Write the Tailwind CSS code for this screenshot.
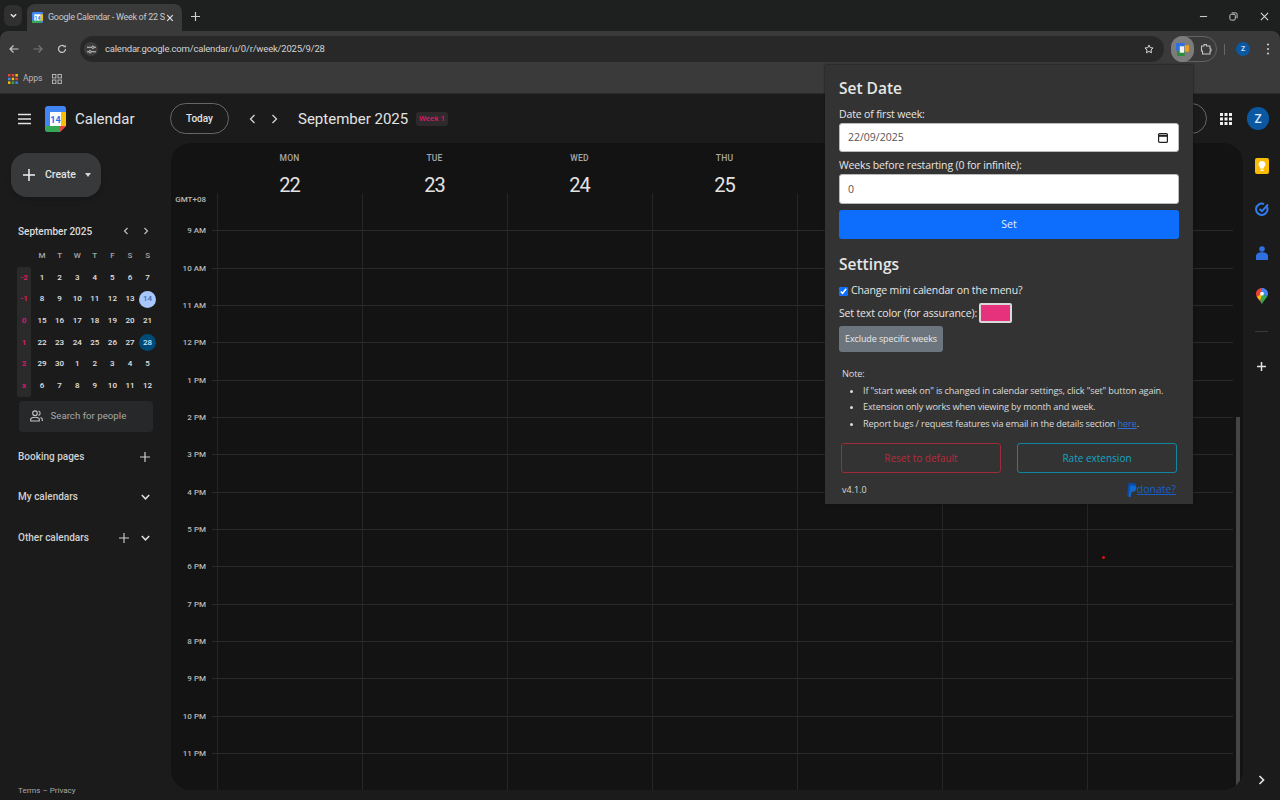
<!DOCTYPE html>
<html lang="en">
<head>
    <meta charset="UTF-8">
    <title>Google Calendar - Week of 22 September 2025</title>
    <script src="https://cdn.jsdelivr.net/npm/@tailwindcss/browser@4"></script>
</head>
<body class="relative flex h-[800px] w-[1280px] flex-col overflow-hidden bg-[#1b1b1b] font-['Roboto',sans-serif] text-[#e3e3e3]">

    <!-- tab strip -->
    <div class="flex h-[31px] items-end bg-[#1e1f1f]">
        <div class="mb-[5px] ml-[4px] flex h-[21px] w-[18px] items-center justify-center rounded-md bg-[#303030]">
            <svg class="h-[9px] w-[9px]" viewBox="0 0 10 10" fill="none" stroke="#e3e3e3" stroke-width="1.6"><path d="M2 3.5 5 6.5 8 3.5"/></svg>
        </div>
        <div class="ml-[5px] flex h-[27px] w-[155px] items-center rounded-t-lg bg-[#3a3a3a] pl-[5px]">
            <svg class="h-[11px] w-[11px]" viewBox="0 0 24 24"><rect width="24" height="24" rx="3" fill="#4285f4"/><rect x="5" y="5" width="14" height="14" fill="#fff"/><rect y="19" width="19" height="5" fill="#34a853"/><rect x="19" y="5" width="5" height="14" fill="#fbbc04"/><text x="12" y="17" font-size="11" font-weight="700" text-anchor="middle" fill="#1a73e8">14</text></svg>
            <span class="ml-[5px] w-[118px] text-[9px] tracking-[-0.3px] whitespace-nowrap text-[#c8c8c8]">Google Calendar - Week of 22 S</span>
            <svg class="h-[8px] w-[8px]" viewBox="0 0 10 10" stroke="#e3e3e3" stroke-width="1.5"><path d="M1.500 1.500 8.500 8.500M8.500 1.500 1.500 8.500"/></svg>
        </div>
        <svg class="mb-[10px] ml-[9px] h-[9px] w-[9px]" viewBox="0 0 10 10" stroke="#d0d0d0" stroke-width="1.3"><path d="M5 0v10M0 5h10"/></svg>
        <div class="mb-[10px] ml-auto flex items-center">
            <svg class="h-[9px] w-[9px]" viewBox="0 0 10 10" stroke="#c8c8c8" stroke-width="1.2"><path d="M1 5h8"/></svg>
            <svg class="ml-[21px] h-[9px] w-[9px]" viewBox="0 0 10 10" fill="none" stroke="#c8c8c8" stroke-width="1.1"><rect x="1" y="2.5" width="6" height="6.5" rx="1.5"/><path d="M3 1h4.5A1.5 1.5 0 0 1 9 2.5V7"/></svg>
            <svg class="ml-[22px] mr-[11px] h-[9px] w-[9px]" viewBox="0 0 10 10" stroke="#d8d8d8" stroke-width="1.2"><path d="M1 1l8 8M9 1 1 9"/></svg>
        </div>
    </div>

    <!-- toolbar -->
    <div class="flex h-[33px] items-center rounded-t-lg bg-[#3a3a3a] pt-[3px]">
        <svg class="ml-[9px] h-[10px] w-[10px]" viewBox="0 0 10 10" fill="none" stroke="#c8c8c8" stroke-width="1.2"><path d="M9.5 5H1M4.5 1.5 1 5l3.5 3.5"/></svg>
        <svg class="ml-[14px] h-[10px] w-[10px]" viewBox="0 0 10 10" fill="none" stroke="#777" stroke-width="1.2"><path d="M.5 5H9M5.5 1.5 9 5 5.500 8.500"/></svg>
        <svg class="ml-[14px] h-[10px] w-[10px]" viewBox="0 0 10 10" fill="none" stroke="#c8c8c8" stroke-width="1.2"><path d="M8.500 5a3.500 3.500 0 1 1-1-2.500"/><path d="M8.800 .8v2.500H6.300" fill="#c8c8c8" stroke="none"/></svg>
        <div class="ml-[13px] flex h-[26px] w-[1084px] items-center rounded-full bg-[#282828]">
            <div class="ml-[4px] flex h-[14px] w-[14px] items-center justify-center rounded-full bg-[#3d3d3d]">
                <svg class="h-[9px] w-[9px]" viewBox="0 0 10 10" fill="none" stroke="#d5d5d5" stroke-width="1"><path d="M0 2.500h5M8 2.500h2M0 7.500h2M5 7.500h5"/><circle cx="6.500" cy="2.500" r="1.300"/><circle cx="3.500" cy="7.500" r="1.300"/></svg>
            </div>
            <span class="ml-[7px] text-[9.5px] tracking-[-0.2px] text-[#d2d2d2]">calendar.google.com/calendar/u/0/r/week/2025/9/28</span>
            <svg class="ml-auto mr-[10px] h-[10px] w-[10px]" viewBox="0 0 24 24" fill="none" stroke="#d8d8d8" stroke-width="2.400"><path d="M12 2.500l2.900 6.300 6.900.8-5.100 4.700 1.400 6.800-6.100-3.400-6.100 3.400 1.400-6.800L2.200 9.600l6.900-.8z"/></svg>
        </div>
        <div class="ml-[7px] flex h-[26px] w-[46px] items-center rounded-full border border-[#626262]">
            <div class="-ml-px flex h-[26px] w-[23px] shrink-0 items-center justify-center rounded-full bg-[#7c7c7c]">
                <svg class="h-[13px] w-[13px]" viewBox="0 0 12 12"><rect width="8" height="7" fill="#2f6fe0"/><rect x="8" y="2" width="4" height="6" fill="#e8a020"/><rect x="1" y="7" width="7" height="5" fill="#2c8a3e"/><rect x="3.500" y="3" width="4" height="6" fill="#f2f2f2"/></svg>
            </div>
            <svg class="ml-[6px] h-[12px] w-[12px]" viewBox="0 0 12 12" fill="none" stroke="#c8c8c8" stroke-width="1.100"><path d="M1.500 3h2.500V1.500h2.500V3H10v3h1v2h-1v3H2.500V8H1.500z" stroke-linejoin="round"/></svg>
        </div>
        <div class="ml-[7px] h-[11px] w-px bg-[#666]"></div>
        <div class="ml-[11px] flex h-[14px] w-[14px] items-center justify-center rounded-full bg-[#0b57a0] text-[7px] font-bold text-[#cfe3ff]">Z</div>
        <svg class="ml-[16px] h-[12px] w-[4px]" viewBox="0 0 4 12" fill="#c8c8c8"><circle cx="2" cy="1.500" r="1.100"/><circle cx="2" cy="6" r="1.100"/><circle cx="2" cy="10.500" r="1.100"/></svg>
    </div>

    <!-- bookmarks bar -->
    <div class="flex h-[30px] items-center border-b border-[#2c2c2c] bg-[#3a3a3a]">
        <svg class="ml-[8px] h-[10px] w-[10px]" viewBox="0 0 10 10">
            <rect width="2.500" height="2.500" fill="#ea4335"/><rect x="3.700" width="2.500" height="2.500" fill="#ea4335"/><rect x="7.400" width="2.500" height="2.500" fill="#fbbc04"/>
            <rect y="3.700" width="2.500" height="2.500" fill="#4285f4"/><rect x="3.700" y="3.700" width="2.500" height="2.500" fill="#fbbc04"/><rect x="7.400" y="3.700" width="2.500" height="2.500" fill="#ea4335"/>
            <rect y="7.400" width="2.500" height="2.500" fill="#fbbc04"/><rect x="3.700" y="7.400" width="2.500" height="2.500" fill="#34a853"/><rect x="7.400" y="7.400" width="2.500" height="2.500" fill="#4285f4"/>
        </svg>
        <span class="ml-[5px] w-[18px] text-[8.5px] text-[#b8b8b8]">Apps</span>
        <svg class="ml-[11px] h-[10px] w-[10px]" viewBox="0 0 10 10" fill="none" stroke="#c0c0c0" stroke-width=".9"><rect x=".5" y=".5" width="3.400" height="3.400"/><rect x="6" y=".5" width="3.400" height="3.400"/><rect x=".5" y="6" width="3.400" height="3.400"/><rect x="6" y="6" width="3.400" height="3.400"/></svg>
    </div>

    <!-- calendar app -->
    <div class="flex min-h-0 flex-1 flex-col">
        <header class="flex h-[49px] shrink-0 items-center">
            <svg class="ml-[18px] h-[12px] w-[13px]" viewBox="0 0 13 12" stroke="#e3e3e3" stroke-width="1.400"><path d="M0 1.500h13M0 6h13M0 10.500h13"/></svg>
            <svg class="ml-[14px] h-[26px] w-[21px]" viewBox="0 0 21 26">
                <path d="M3 0h15a3 3 0 0 1 3 3v17l-6 6H3a3 3 0 0 1-3-3V3a3 3 0 0 1 3-3z" fill="#4285f4"/>
                <rect x="5" y="6" width="11" height="14" fill="#fff"/>
                <path d="M16 6h5v14h-5z" fill="#fbbc04"/>
                <path d="M0 20h15v6H3a3 3 0 0 1-3-3z" fill="#34a853"/>
                <path d="M15 20h6l-6 6z" fill="#ea4335"/>
                <text x="10.500" y="17" font-size="9" font-weight="700" text-anchor="middle" fill="#1a73e8">14</text>
            </svg>
            <span class="ml-[9px] mt-[2px] w-[59px] text-[15px] text-[#e3e3e3]">Calendar</span>
            <button class="ml-[36px] h-[31px] w-[59px] rounded-full border border-[#666] text-[10px] font-medium text-[#e3e3e3]">Today</button>
            <svg class="ml-[20px] h-[10px] w-[7px]" viewBox="0 0 7 10" fill="none" stroke="#d5d5d5" stroke-width="1.300"><path d="M5.500 1 1.500 5l4 4"/></svg>
            <svg class="ml-[15px] h-[10px] w-[7px]" viewBox="0 0 7 10" fill="none" stroke="#d5d5d5" stroke-width="1.300"><path d="M1.500 1l4 4-4 4"/></svg>
            <span class="ml-[20px] mt-[1px] w-[110px] text-[15px] whitespace-nowrap text-[#e3e3e3]">September 2025</span>
            <span class="ml-[8px] flex h-[14px] w-[32px] items-center justify-center rounded-[3px] bg-[#2e2a2c] text-[8px] font-medium text-[#d81b60]">Week 1</span>
            <div class="ml-auto h-[31px] w-[60px] rounded-full border border-[#666]"></div>
            <svg class="ml-[13px] h-[12px] w-[12px]" viewBox="0 0 12 12" fill="#f0f0f0">
                <rect width="3" height="3"/><rect x="4.500" width="3" height="3"/><rect x="9" width="3" height="3"/>
                <rect y="4.500" width="3" height="3"/><rect x="4.500" y="4.500" width="3" height="3"/><rect x="9" y="4.500" width="3" height="3"/>
                <rect y="9" width="3" height="3"/><rect x="4.500" y="9" width="3" height="3"/><rect x="9" y="9" width="3" height="3"/>
            </svg>
            <div class="ml-[15px] mr-[11px] flex h-[23px] w-[22px] items-center justify-center rounded-full bg-[#0b57a0] text-[12px] font-medium text-[#d8e8ff]">Z</div>
        </header>

        <div class="flex min-h-0 flex-1">
            <!-- sidebar -->
            <aside class="flex w-[171px] shrink-0 flex-col">
                <button class="ml-[11px] mt-[10px] flex h-[44px] w-[90px] items-center rounded-2xl bg-[#37393b] shadow-md">
                    <svg class="ml-[12px] h-[12px] w-[12px]" viewBox="0 0 12 12" stroke="#f0f0f0" stroke-width="1.500"><path d="M6 0v12M0 6h12"/></svg>
                    <span class="ml-[10px] text-[10.5px] font-medium text-[#e3e3e3]">Create</span>
                    <svg class="ml-[9px] h-[4px] w-[6px]" viewBox="0 0 6 4" fill="#d5d5d5"><path d="M0 0h6L3 4z"/></svg>
                </button>

                <div class="ml-[18px] mt-[27px] flex h-[14px] items-center">
                    <span class="w-[73px] text-[10px] font-medium whitespace-nowrap text-[#dcdcdc]">September 2025</span>
                    <svg class="ml-[32px] h-[8px] w-[6px]" viewBox="0 0 6 8" fill="none" stroke="#c4c4c4" stroke-width="1.100"><path d="M4.500 1 1.500 4l3 3"/></svg>
                    <svg class="ml-[14px] h-[8px] w-[6px]" viewBox="0 0 6 8" fill="none" stroke="#c4c4c4" stroke-width="1.100"><path d="M1.500 1l3 3-3 3"/></svg>
                </div>

                <div class="ml-[17px] mt-[7px] flex">
                    <div class="mt-[21.700px] w-[14px] rounded-[2px] bg-[#2a2a2a]" id="weekNums"></div>
                    <div class="ml-[2.200px] grid w-[123.200px] grid-cols-7 text-center" id="miniGrid"></div>
                </div>

                <div class="ml-[18.500px] mt-[4px] flex h-[31px] w-[134px] items-center rounded-[4px] bg-[#272829]">
                    <svg class="ml-[11px] h-[12px] w-[13px]" viewBox="0 0 13 12" fill="none" stroke="#c4c4c4" stroke-width="1.100"><circle cx="5" cy="3.200" r="2.300"/><path d="M.7 11V9.500C.7 8 3 7.300 5 7.300s4.300.7 4.300 2.200V11zM8.500 1a2.300 2.300 0 0 1 0 4.400M10.500 7.600c1 .4 1.800 1 1.800 1.900V11"/></svg>
                    <span class="ml-[8px] text-[9.7px] text-[#a8a8a8]">Search for people</span>
                </div>

                <div class="ml-[18px] mt-[18px] flex h-[14px] w-[132px] items-center justify-between text-[10px] font-medium text-[#d0d0d0]">
                    <span>Booking pages</span>
                    <svg class="h-[10px] w-[10px]" viewBox="0 0 10 10" stroke="#d0d0d0" stroke-width="1.200"><path d="M5 0v10M0 5h10"/></svg>
                </div>
                <div class="ml-[18px] mt-[26px] flex h-[14px] w-[132px] items-center justify-between text-[10px] font-medium text-[#d0d0d0]">
                    <span>My calendars</span>
                    <svg class="h-[6px] w-[9px]" viewBox="0 0 9 6" fill="none" stroke="#e0e0e0" stroke-width="1.500"><path d="M.8 1 4.500 4.800 8.200 1"/></svg>
                </div>
                <div class="ml-[18px] mt-[27px] flex h-[14px] w-[132px] items-center text-[10px] font-medium text-[#d0d0d0]">
                    <span>Other calendars</span>
                    <svg class="ml-auto h-[10px] w-[10px]" viewBox="0 0 10 10" stroke="#d0d0d0" stroke-width="1.100"><path d="M5 0v10M0 5h10"/></svg>
                    <svg class="ml-[12px] h-[6px] w-[9px]" viewBox="0 0 9 6" fill="none" stroke="#e0e0e0" stroke-width="1.500"><path d="M.8 1 4.500 4.800 8.200 1"/></svg>
                </div>
                <div class="ml-[18px] mt-auto h-[15px] text-[8px] text-[#a8a8a8]">Terms – Privacy</div>
            </aside>

            <!-- week grid -->
            <main class="relative mb-[10px] flex w-[1072px] shrink-0 flex-col overflow-hidden rounded-[20px] bg-[#131313]">
                <div class="flex h-[50px] shrink-0 pl-[46px]">
                    <div class="flex w-[145px] flex-col items-center pt-[9px]"><span class="text-[8.500px] font-medium tracking-wide text-[#a8a8a8]">MON</span><span class="mt-[8px] text-[20px] leading-[24px] tracking-[-1px] text-[#e3e3e3]">22</span></div>
                    <div class="flex w-[145px] flex-col items-center pt-[9px]"><span class="text-[8.500px] font-medium tracking-wide text-[#a8a8a8]">TUE</span><span class="mt-[8px] text-[20px] leading-[24px] tracking-[-1px] text-[#e3e3e3]">23</span></div>
                    <div class="flex w-[145px] flex-col items-center pt-[9px]"><span class="text-[8.500px] font-medium tracking-wide text-[#a8a8a8]">WED</span><span class="mt-[8px] text-[20px] leading-[24px] tracking-[-1px] text-[#e3e3e3]">24</span></div>
                    <div class="flex w-[145px] flex-col items-center pt-[9px]"><span class="text-[8.500px] font-medium tracking-wide text-[#a8a8a8]">THU</span><span class="mt-[8px] text-[20px] leading-[24px] tracking-[-1px] text-[#e3e3e3]">25</span></div>
                </div>
                <div class="flex min-h-0 flex-1 flex-col" id="hourRows"></div>
                <!-- scrollbar thumb + current time dot -->
                <div class="absolute right-[3px] top-[274px] h-[373px] w-[4px] bg-[#454545]"></div>
                <div class="absolute left-[931px] top-[413px] h-[3px] w-[3px] rounded-full bg-[#e01010]"></div>
            </main>

            <!-- right rail -->
            <aside class="flex flex-1 flex-col items-center">
                <div class="mt-[15px] flex h-[16px] w-[14px] items-center justify-center rounded-[2px] bg-[#fbbc04]">
                    <svg class="h-[10px] w-[8px]" viewBox="0 0 8 10" fill="#fff"><path d="M4 0a3.300 3.300 0 0 1 2 6v1.500H2V6a3.300 3.300 0 0 1 2-6zM2.500 8.500h3V10h-3z"/></svg>
                </div>
                <svg class="mt-[27px] h-[16px] w-[14px]" viewBox="0 0 14 16" fill="none" stroke="#2f7cf0" stroke-width="2"><path d="M12 6a5.700 5.700 0 1 1-3-3"/><path d="M4.500 8 7 10.200 13 3.500"/></svg>
                <svg class="mt-[29px] h-[14px] w-[12px]" viewBox="0 0 12 14" fill="#2f6fe0"><circle cx="6" cy="3" r="2.800"/><path d="M0 14V10c0-2.300 2.500-3.700 6-3.700S12 7.700 12 10v4z"/></svg>
                <svg class="mt-[28px] h-[16px] w-[12px]" viewBox="0 0 12 16">
                    <path d="M6 16C4.500 12.500 0 10 0 5.700 0 2.500 2.700 0 6 0v4a1.800 1.800 0 0 0 0 3.500z" fill="#ea4335"/>
                    <path d="M6 0c3.300 0 6 2.500 6 5.700 0 1-.3 2-.7 2.700L7.500 6.500A1.800 1.800 0 0 0 6 4z" fill="#4285f4"/>
                    <path d="M1 8.800 4.500 6.500 6 7.500 4.200 12.500C3 11.200 1.800 10.200 1 8.800z" fill="#fbbc04"/>
                    <path d="M6 16c1.200-3 3.800-5 5.300-7.600L7.500 6.500 6 7.500 4.200 12.500c.7.900 1.300 2.200 1.800 3.500z" fill="#34a853"/>
                    <circle cx="6" cy="5.700" r="1.900" fill="#fff"/>
                </svg>
                <div class="mt-[27px] h-px w-[13px] bg-[#3a3a3a]"></div>
                <svg class="mt-[30px] h-[9px] w-[9px]" viewBox="0 0 9 9" stroke="#e3e3e3" stroke-width="1.500"><path d="M4.500 0v9M0 4.500h9"/></svg>
                <svg class="mb-[15px] mt-auto h-[10px] w-[7px]" viewBox="0 0 7 10" fill="none" stroke="#e3e3e3" stroke-width="1.700"><path d="M1.500 1l4 4-4 4"/></svg>
            </aside>
        </div>
    </div>

    <!-- extension popup -->
    <div class="absolute left-[825px] top-[65px] h-[439px] w-[368px] bg-[#333333] px-[14px] font-['Open_Sans',sans-serif] text-[#e6e6e6] shadow-[0_0_2px_#111]">
        <h2 class="mt-[12px] h-[23px] text-[15.5px] leading-[23px] font-semibold">Set Date</h2>
        <label class="mt-[7px] block h-[15px] text-[10.5px] leading-[15px] tracking-[-0.15px]">Date of first week:</label>
        <div class="mt-[1px] flex h-[29px] items-center justify-between rounded-[3px] border border-[#bbb] bg-white pl-[8px] pr-[10px] text-[10.5px] text-[#555]">
            <span class="pt-[1px]">22/09/2025</span>
            <svg class="h-[11px] w-[10px]" viewBox="0 0 10 11" fill="none" stroke="#222" stroke-width="1.200"><rect x=".6" y="1.600" width="8.800" height="8.800" rx="1"/><path d="M.6 3.800h8.800" stroke-width="2"/></svg>
        </div>
        <label class="mt-[6px] block h-[15px] text-[10.5px] leading-[15px] tracking-[-0.15px]">Weeks before restarting (0 for infinite):</label>
        <div class="mt-[1px] flex h-[30px] items-center rounded-[3px] border border-[#bbb] bg-white pl-[8px] pt-[1px] text-[10.5px] text-[#555]">0</div>
        <button class="mt-[6px] h-[29px] w-full rounded-[3px] bg-[#0d6efd] text-[10.5px] text-[#e8f0ff]">Set</button>
        <h2 class="mt-[13px] h-[24px] text-[15.5px] leading-[24px] font-semibold">Settings</h2>
        <div class="mt-[8px] flex h-[14px] items-center text-[10.5px] tracking-[-0.15px]">
            <input type="checkbox" checked class="h-[9px] w-[9px] accent-[#0d6efd]">
            <span class="ml-[3px]">Change mini calendar on the menu?</span>
        </div>
        <div class="mt-[5px] flex h-[20px] items-center text-[10.5px] tracking-[-0.15px]">
            <span class="w-[140px] pt-[2px]">Set text color (for assurance):</span>
            <div class="h-[20px] w-[33px] rounded-[2px] border-2 border-[#d8d8d8] bg-[#e6317c]"></div>
        </div>
        <button class="mt-[3px] block h-[26px] w-[104px] rounded-[3px] bg-[#6c757d] text-[9px] tracking-[-0.1px] text-[#e8e8e8]">Exclude specific weeks</button>
        <div class="ml-[3px] mt-[14px] text-[9.2px] leading-[16.500px] tracking-[-0.15px] text-[#dcdcdc]">
            <p>Note:</p>
            <ul class="ml-[21px] list-disc">
                <li>If "start week on" is changed in calendar settings, click "set" button again.</li>
                <li>Extension only works when viewing by month and week.</li>
                <li>Report bugs / request features via email in the details section <a class="text-[#2e6fd6] underline">here</a>.</li>
            </ul>
        </div>
        <div class="ml-[2px] mt-[11px] flex gap-[16px]">
            <button class="h-[30px] w-[160px] rounded-[3px] border border-[#9d2c3a] text-[10px] text-[#b82c3c]">Reset to default</button>
            <button class="h-[30px] w-[160px] rounded-[3px] border border-[#11879f] text-[10px] text-[#12a6c4]">Rate extension</button>
        </div>
        <div class="ml-[3px] mr-[3px] mt-[9px] flex h-[16px] items-center justify-between text-[9px]">
            <span class="text-[#d8d8d8]">v4.1.0</span>
            <span class="flex items-center">
                <svg class="h-[14px] w-[10px]" viewBox="0 0 10 14"><path d="M1.500 0H6c2.500 0 3.500 1.500 3 3.500C8.500 6 6.800 7 4.800 7H3.500L2.500 12.500H0z" fill="#0a4aa8"/><path d="M3.200 2.500H7c1.500 0 2.800 1 2.500 3C9 7.800 7.500 9 5.500 9H4.500L3.800 14H1.500z" fill="#0f70d8" opacity=".85"/></svg>
                <a class="text-[10.5px] text-[#1560c8] underline">donate?</a>
            </span>
        </div>
    </div>

    <script>
        // mini calendar
        const days = [
            1,2,3,4,5,6,7, 8,9,10,11,12,13,14, 15,16,17,18,19,20,21,
            22,23,24,25,26,27,28, 29,30,1,2,3,4,5, 6,7,8,9,10,11,12
        ]
        const miniGrid = document.getElementById("miniGrid")
        let cells = ""
        "MTWTFSS".split("").forEach(d => {
            cells += `<div class="flex h-[21.7px] items-center justify-center text-[8px] font-medium text-[#a8a8a8]">${d}</div>`
        })
        days.forEach((d, i) => {
            if (i === 13) {
                cells += `<div class="flex h-[21.7px] items-center justify-center"><span class="flex h-[17px] w-[17px] items-center justify-center rounded-full bg-[#a8c7fa] text-[8px] font-medium text-[#3b6fb5]">14</span></div>`
            } else if (i === 27) {
                cells += `<div class="flex h-[21.7px] items-center justify-center"><span class="flex h-[17px] w-[17px] items-center justify-center rounded-full bg-[#004a77] text-[8px] font-medium text-[#c2e7ff]">28</span></div>`
            } else {
                cells += `<div class="flex h-[21.7px] items-center justify-center text-[8px] font-medium text-[#e3e3e3]">${d}</div>`
            }
        })
        miniGrid.innerHTML = cells

        document.getElementById("weekNums").innerHTML = ["-2", "-1", "0", "1", "2", "x"].map(w =>
            `<div class="flex h-[21.7px] items-center justify-center text-[8px] font-bold text-[#d81b60]">${w}</div>`
        ).join("")

        // hour rows
        const hours = ["", "9 AM", "10 AM", "11 AM", "12 PM", "1 PM", "2 PM", "3 PM", "4 PM", "5 PM", "6 PM", "7 PM", "8 PM", "9 PM", "10 PM", "11 PM"]
        document.getElementById("hourRows").innerHTML = hours.map((h, i) => {
            const line = i === 0 ? "border-transparent" : "border-[#2a2a2a]"
            const label = i === 0
                ? `<span class="mt-[2px] text-[8px] font-medium leading-[10px] text-[#b8b8b8]">GMT+08</span>`
                : `<span class="-mt-[4px] text-[8px] font-medium leading-[10px] text-[#b8b8b8]">${h}</span>`
            let cols = ""
            for (let c = 0; c < 7; c++) {
                cols += `<div class="w-[145px] border-l border-t border-l-[#262626] ${line}"></div>`
            }
            return `<div class="flex h-[37.35px] shrink-0"><div class="flex w-[35px] justify-end">${label}</div><div class="ml-[6px] w-[5px] border-t ${line}"></div>${cols}<div class="w-[1px] border-t ${line}"></div></div>`
        }).join("")
    </script>
</body>
</html>
